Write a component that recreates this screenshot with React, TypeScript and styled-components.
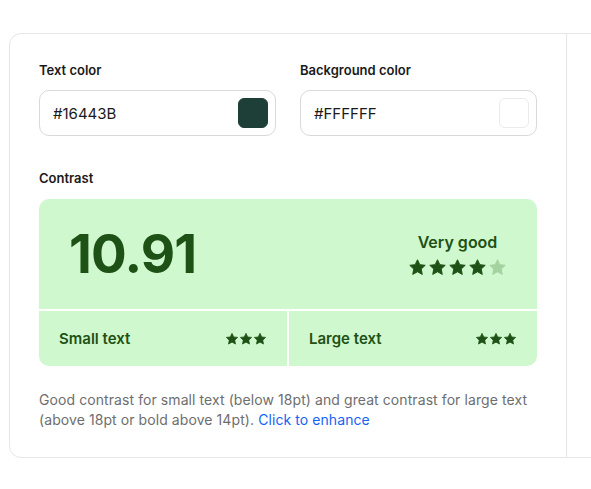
import React from 'react';
import styled, { createGlobalStyle } from 'styled-components';

const GlobalStyle = createGlobalStyle`
  html, body {
    margin: 0;
    padding: 0;
    background: #FFFFFF;
    overflow: hidden;
  }
  body {
    font-family: Inter, "Noto Sans", "Liberation Sans", sans-serif;
    color: #1A1A1A;
  }
  * {
    box-sizing: border-box;
  }
`;

const Page = styled.div`
  padding: 33px 0 0 9px;
  width: 591px;
  height: 489px;
  overflow: hidden;
`;

const Card = styled.div`
  display: flex;
  width: 860px;
  border: 1px solid #E6E6E6;
  border-radius: 12px;
  background: #FFFFFF;
`;

const Panel = styled.div`
  width: 557px;
  flex-shrink: 0;
  padding: 27px 29px 27px 29px;
  border-right: 1px solid #E6E6E6;
  display: flex;
  flex-direction: column;
`;

const SidePanel = styled.div`
  flex: 1;
`;

const FieldRow = styled.div`
  display: grid;
  grid-template-columns: 1fr 1fr;
  gap: 24px;
`;

const Field = styled.div`
  display: flex;
  flex-direction: column;
  gap: 11px;
`;

const Label = styled.span`
  font-size: 13px;
  line-height: 18px;
  font-weight: 600;
  color: #1A1A1A;
`;

const InputBox = styled.div`
  height: 46px;
  display: flex;
  align-items: center;
  justify-content: space-between;
  padding: 0 7px 0 13px;
  border: 1px solid #D9D9D9;
  border-radius: 10px;
  font-size: 15px;
  color: #1A1A1A;
`;

const Swatch = styled.span<{ $color: string }>`
  width: 30px;
  height: 30px;
  border-radius: 6px;
  background: ${p => p.$color};
  border: 1px solid ${p => (p.$color === '#FFFFFF' ? '#EBEBEB' : p.$color)};
`;

const ContrastSection = styled.div`
  margin-top: 33px;
  display: flex;
  flex-direction: column;
  gap: 12px;
`;

const ScoreGrid = styled.div`
  display: grid;
  grid-template-columns: 1fr 1fr;
  gap: 2px;
  background: #FFFFFF;
  border-radius: 10px;
  overflow: hidden;
`;

const ScoreTop = styled.div`
  grid-column: 1 / span 2;
  height: 110px;
  background: #D0F8CE;
  display: flex;
  align-items: center;
  justify-content: space-between;
  padding: 0 30px;
`;

const Ratio = styled.span`
  font-size: 53px;
  font-weight: 700;
  letter-spacing: -0.8px;
  color: #1E5115;
  line-height: 1;
`;

const Rating = styled.div`
  display: flex;
  flex-direction: column;
  align-items: center;
  gap: 6px;
`;

const RatingText = styled.span`
  font-size: 16px;
  line-height: 20px;
  font-weight: 600;
  color: #1E5115;
`;

const Stars = styled.div<{ $gap: number }>`
  display: flex;
  gap: ${p => p.$gap}px;
`;

const Cell = styled.div`
  height: 55px;
  background: #D0F8CE;
  display: flex;
  align-items: center;
  justify-content: space-between;
  padding: 0 20px;
`;

const CellLabel = styled.span`
  font-size: 15px;
  font-weight: 600;
  color: #1E5115;
`;

const Description = styled.p`
  margin: 24px 0 0;
  font-size: 14px;
  line-height: 20px;
  letter-spacing: 0.08px;
  color: #6E6E6E;
`;

const Link = styled.span`
  color: #1463F3;
  cursor: pointer;
`;

const Star = ({ size, color }: { size: number; color: string }) => (
  <svg width={size} height={size} viewBox="0 0 24 24">
    <path
      d="M12 2.2l2.95 6.2 6.8.85-5 4.7 1.28 6.75L12 17.4l-6.03 3.3 1.28-6.75-5-4.7 6.8-.85L12 2.2z"
      fill={color}
      stroke={color}
      strokeWidth="1.2"
      strokeLinejoin="round"
    />
  </svg>
);

const StarRow = ({ count, filled, size, gap }: { count: number; filled: number; size: number; gap: number }) => (
  <Stars $gap={gap}>
    {Array.from({ length: count }).map((_, i) => (
      <Star key={i} size={size} color={i < filled ? '#1E5115' : '#A5D3A0'} />
    ))}
  </Stars>
);

const App: React.FC = () => {
  return (
    <Page>
      <GlobalStyle />
      <Card>
        <Panel>
          <FieldRow>
            <Field>
              <Label>Text color</Label>
              <InputBox>
                #16443B
                <Swatch $color="#1E3F37" />
              </InputBox>
            </Field>
            <Field>
              <Label>Background color</Label>
              <InputBox>
                #FFFFFF
                <Swatch $color="#FFFFFF" />
              </InputBox>
            </Field>
          </FieldRow>

          <ContrastSection>
            <Label>Contrast</Label>
            <ScoreGrid>
              <ScoreTop>
                <Ratio>10.91</Ratio>
                <Rating>
                  <RatingText>Very good</RatingText>
                  <StarRow count={5} filled={4} size={19} gap={1} />
                </Rating>
              </ScoreTop>
              <Cell>
                <CellLabel>Small text</CellLabel>
                <StarRow count={3} filled={3} size={14} gap={0} />
              </Cell>
              <Cell>
                <CellLabel>Large text</CellLabel>
                <StarRow count={3} filled={3} size={14} gap={0} />
              </Cell>
            </ScoreGrid>
          </ContrastSection>

          <Description>
            Good contrast for small text (below 18pt) and great contrast for large text
            (above 18pt or bold above 14pt). <Link>Click to enhance</Link>
          </Description>
        </Panel>
        <SidePanel />
      </Card>
    </Page>
  );
};

export default App;
